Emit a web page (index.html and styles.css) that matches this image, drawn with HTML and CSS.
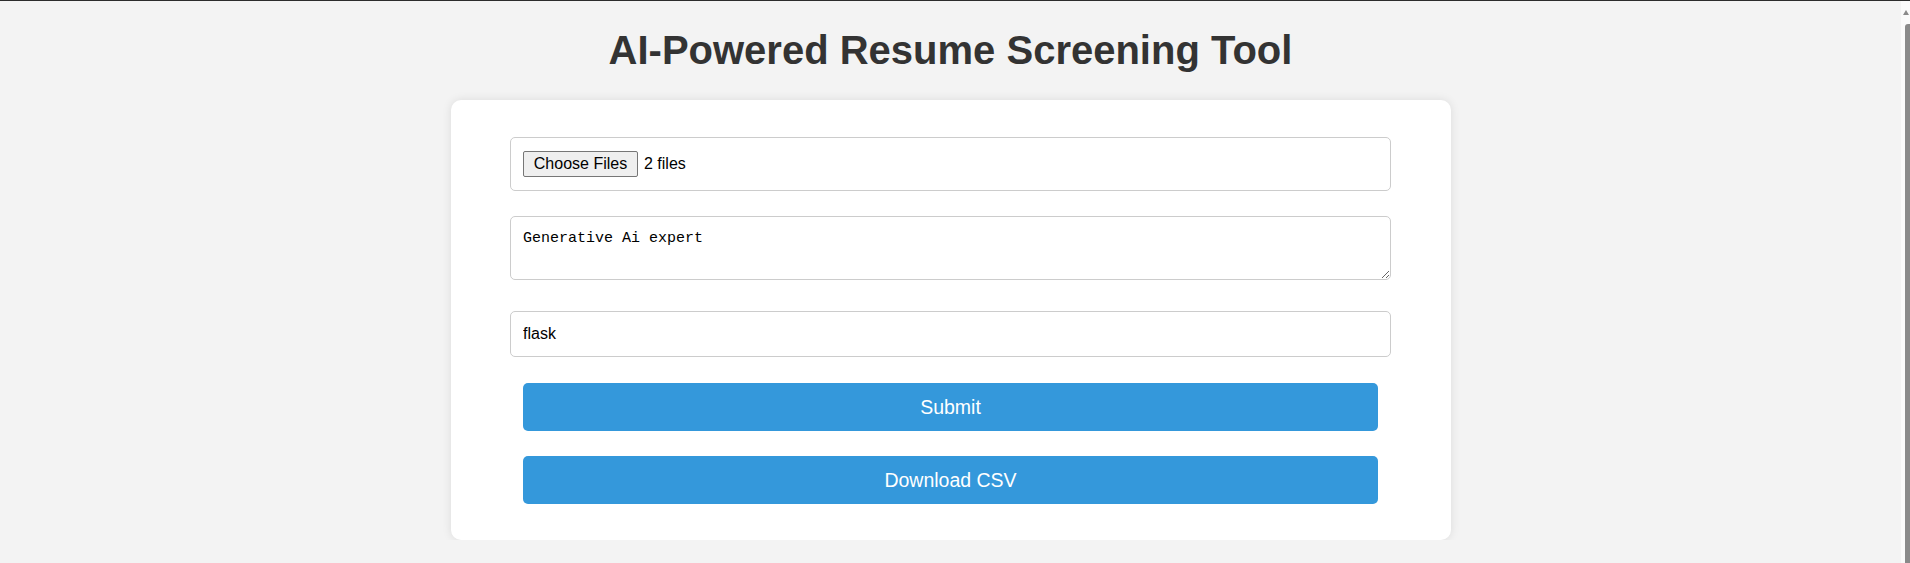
FILE: index.html
```html
<!DOCTYPE html>
<html lang="en">
<head>
<meta charset="utf-8">
<title>AI-Powered Resume Screening Tool</title>
<link rel="stylesheet" href="styles.css">
</head>
<body>
<div class="page">
  <h1 class="title">AI-Powered Resume Screening Tool</h1>
  <div class="card">
    <form class="form">
      <div class="file-field">
        <span class="file-btn">Choose Files</span>
        <span class="file-label">2 files</span>
      </div>
      <textarea class="jd">Generative Ai expert</textarea>
      <input class="keywords" type="text" value="flask">
      <button class="btn" type="button">Submit</button>
      <button class="btn" type="button">Download CSV</button>
    </form>
  </div>
</div>
<div class="scrollbar">
  <div class="scroll-arrow"></div>
  <div class="scroll-thumb"></div>
</div>
</body>
</html>
```
FILE: styles.css
```css
html, body {
  margin: 0;
  padding: 0;
}

body {
  background: #f3f3f3;
  font-family: "Liberation Sans", Arial, sans-serif;
  border-top: 1px solid #2c2c2c;
  overflow: hidden;
}

.page {
  margin-right: 9px;
}

.title {
  margin: 26px 0 27px;
  font-size: 40px;
  line-height: 46px;
  font-weight: bold;
  color: #333;
  text-align: center;
}

.card {
  box-sizing: border-box;
  max-width: 1000px;
  margin: 0 auto;
  padding: 25px;
  background: #fff;
  border-radius: 10px;
  box-shadow: 0 0 10px rgba(0, 0, 0, 0.1);
}

.form {
  display: flex;
  flex-direction: column;
  align-items: center;
  gap: 25px;
  padding: 12px 0 11px;
}

.file-field,
.jd,
.keywords {
  width: 90%;
  box-sizing: content-box;
  border: 1px solid #ccc;
  border-radius: 5px;
  background: #fff;
  margin: 0;
}

.file-field {
  display: flex;
  align-items: center;
  padding: 13px 12px;
  height: 26px;
  font-size: 16px;
  color: #000;
}

.file-btn {
  box-sizing: border-box;
  height: 26px;
  width: 115px;
  display: flex;
  align-items: center;
  justify-content: center;
  background: #efefef;
  border: 1px solid #767676;
  border-radius: 2px;
  font-size: 16px;
  color: #000;
}

.file-label {
  margin-left: 6px;
}

.jd {
  display: block;
  height: 36px;
  padding: 13px 12px;
  font-family: "Liberation Mono", "DejaVu Sans Mono", monospace;
  font-size: 15px;
  line-height: 18px;
  color: #000;
  resize: vertical;
  margin-bottom: 6px;
}

.keywords {
  display: block;
  height: 20px;
  padding: 12px;
  font-family: "Liberation Sans", Arial, sans-serif;
  font-size: 16px;
  color: #000;
  outline: none;
  margin-bottom: 1px;
}

.btn {
  box-sizing: border-box;
  width: 90%;
  height: 48px;
  border: none;
  border-radius: 5px;
  background: #3498db;
  color: #fff;
  font-family: "Liberation Sans", Arial, sans-serif;
  font-size: 19.5px;
  cursor: pointer;
}

.scrollbar {
  position: fixed;
  top: 1px;
  right: 0;
  bottom: 0;
  width: 9px;
  background: #fafafa;
}

.scroll-arrow {
  position: absolute;
  top: 9px;
  right: 0;
  width: 0;
  height: 0;
  border-left: 3px solid transparent;
  border-right: 3px solid transparent;
  border-bottom: 5px solid #8a8a8a;
  margin-right: 1px;
}

.scroll-thumb {
  position: absolute;
  top: 23px;
  right: 0;
  bottom: 0;
  width: 5px;
  background: #8a8a8a;
  border-radius: 3px 0 0 0;
}
```
